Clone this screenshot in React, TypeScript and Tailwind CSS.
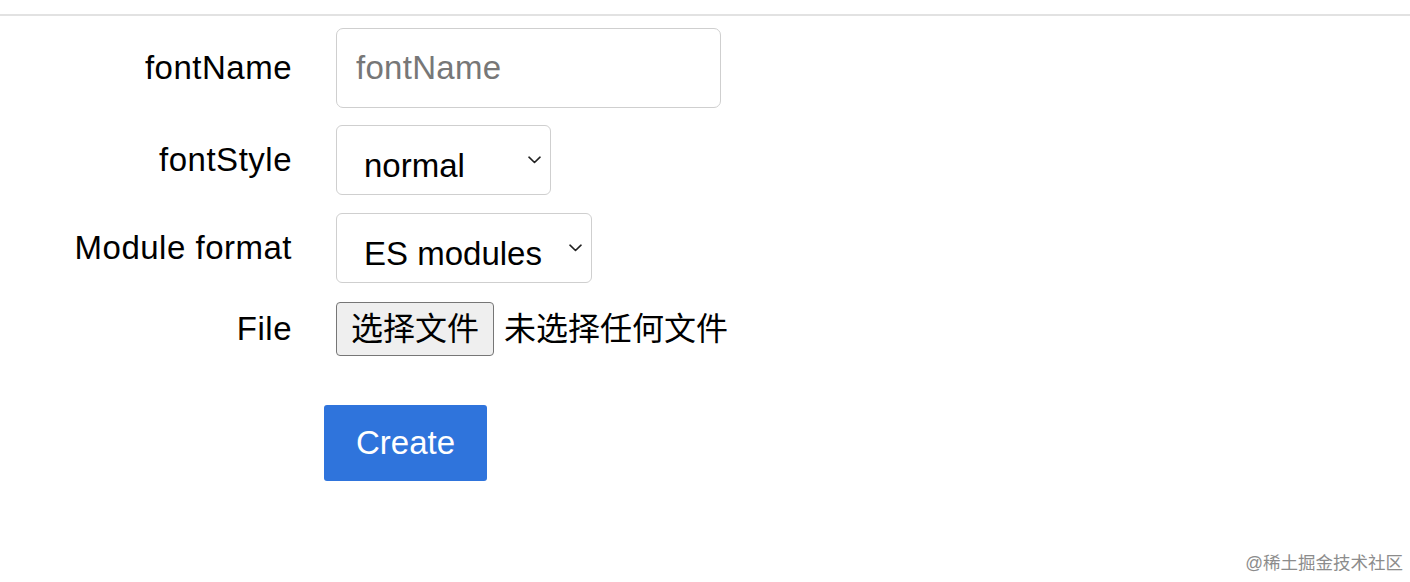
import React from 'react';

const font = {
  fontFamily: '"Liberation Sans", Arial, "Noto Sans CJK SC", sans-serif',
};

function Chevron() {
  return (
    <svg
      className="pointer-events-none absolute right-[10px] top-1/2 -translate-y-[4px]"
      width="13"
      height="8"
      viewBox="0 0 13 8"
      fill="none"
    >
      <path d="M1 1.2 L6.5 6.5 L12 1.2" stroke="#222" strokeWidth="1.6" strokeLinecap="round" strokeLinejoin="round" />
    </svg>
  );
}

function Row({ label, children }: { label: string; children: React.ReactNode }) {
  return (
    <div className="flex items-center">
      <label className="w-[292px] shrink-0 text-right text-[33px] tracking-[0.5px] text-black">{label}</label>
      <div className="ml-[44px] flex items-center">{children}</div>
    </div>
  );
}

export default function App() {
  return (
    <div className="relative h-[582px] w-[1410px] overflow-hidden bg-white" style={font}>
      <div className="mt-[14px] h-[2px] w-full bg-[#e2e2e2]" />

      <form className="mt-[12px] flex flex-col">
        <Row label="fontName">
          <input
            placeholder="fontName"
            className="h-[80px] w-[385px] rounded-[7px] border-[1.5px] border-[#cfcfcf] px-[19px] text-[33px] tracking-[0.3px] text-black placeholder:text-[#777] outline-none"
          />
        </Row>

        <div className="mt-[17px]">
          <Row label="fontStyle">
            <div className="relative">
              <select
                defaultValue="normal"
                className="h-[70px] w-[215px] appearance-none rounded-[6px] border-[1.5px] border-[#cfcfcf] bg-white pl-[27px] pt-[12px] text-[33px] text-black outline-none"
              >
                <option>normal</option>
                <option>italic</option>
              </select>
              <Chevron />
            </div>
          </Row>
        </div>

        <div className="mt-[18px]">
          <Row label="Module format">
            <div className="relative">
              <select
                defaultValue="ES modules"
                className="h-[70px] w-[256px] appearance-none rounded-[6px] border-[1.5px] border-[#cfcfcf] bg-white pl-[27px] pt-[12px] text-[33px] text-black outline-none"
              >
                <option>ES modules</option>
                <option>CommonJS</option>
              </select>
              <Chevron />
            </div>
          </Row>
        </div>

        <div className="mt-[19px]">
          <Row label="File">
            <button
              type="button"
              className="flex h-[54px] w-[158px] items-center justify-center rounded-[4px] border border-[#767676] bg-[#efefef] text-[32px] text-black"
            >
              选择文件
            </button>
            <span className="ml-[10px] text-[32px] text-black">未选择任何文件</span>
          </Row>
        </div>

        <div className="ml-[324px] mt-[49px]">
          <button
            type="button"
            className="h-[76px] w-[163px] rounded-[3px] bg-[#2f74dc] text-[33px] text-white"
          >
            Create
          </button>
        </div>
      </form>

      <div className="absolute bottom-[6px] right-[7px] text-[17.5px] text-[#8c8c8c]">@稀土掘金技术社区</div>
    </div>
  );
}
